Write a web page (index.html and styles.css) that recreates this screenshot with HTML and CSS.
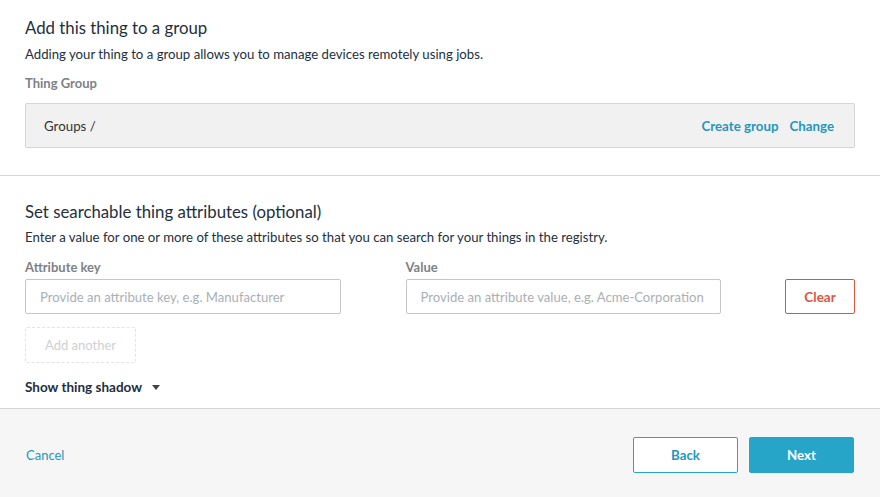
FILE: index.html
```html
<!DOCTYPE html>
<html>
<head>
<meta charset="utf-8">
<link rel="stylesheet" href="styles.css">
</head>
<body>
<div class="page">
  <section class="section group-section">
    <h2 class="title">Add this thing to a group</h2>
    <p class="desc">Adding your thing to a group allows you to manage devices remotely using jobs.</p>
    <div class="label">Thing Group</div>
    <div class="group-box">
      <span class="crumb">Groups /</span>
      <span class="links"><a class="link">Create group</a><a class="link">Change</a></span>
    </div>
  </section>
  <section class="section attr-section">
    <h2 class="title">Set searchable thing attributes (optional)</h2>
    <p class="desc">Enter a value for one or more of these attributes so that you can search for your things in the registry.</p>
    <div class="attr-row">
      <div class="field">
        <div class="label">Attribute key</div>
        <div class="input">Provide an attribute key, e.g. Manufacturer</div>
      </div>
      <div class="field">
        <div class="label">Value</div>
        <div class="input">Provide an attribute value, e.g. Acme-Corporation</div>
      </div>
      <button class="btn-clear">Clear</button>
    </div>
    <button class="btn-add">Add another</button>
    <div class="shadow-toggle">Show thing shadow <span class="caret"></span></div>
  </section>
  <footer class="footer">
    <a class="cancel">Cancel</a>
    <div class="actions">
      <button class="btn btn-back">Back</button>
      <button class="btn btn-next">Next</button>
    </div>
  </footer>
</div>
</body>
</html>
```
FILE: styles.css
```css
* { box-sizing: border-box; }
html, body { margin: 0; padding: 0; background: #fff; }
body { font-family: Lato, "Open Sans", sans-serif; color: #16191f; width: 880px; height: 497px; overflow: hidden; }
.page { display: flex; flex-direction: column; height: 497px; }
.section { padding: 0 25px; }
.group-section { padding-top: 17px; border-bottom: 1px solid #d5d5d5; height: 176px; }
.title { font-size: 16.8px; font-weight: 400; margin: 0; line-height: 22px; color: #232f3e; }
.desc { font-size: 13.2px; margin: 5px 0 0; line-height: 18px; color: #232f3e; }
.group-section .desc { margin-top: 6px; }
.label { font-size: 13px; font-weight: 700; color: #7d8286; line-height: 16px; margin-top: 12px; }
.group-box { margin-top: 12px; height: 45px; border: 1px solid #d5d5d5; border-radius: 2px; background: #f1f1f1; display: flex; align-items: center; justify-content: space-between; padding: 0 20px 0 18px; font-size: 13.3px; }
.crumb { color: #333; }
.links { display: flex; gap: 11px; }
.link { color: #1f97be; font-weight: 700; font-size: 13.3px; }
.attr-section { padding-top: 25px; height: 233px; border-bottom: 1px solid #d5d5d5; }
.attr-row { display: flex; align-items: flex-end; }
.attr-row .label { margin-top: 13px; }
.field { width: 316px; margin-right: 65px; }
.field + .field { margin-right: 64px; }
.input { margin-top: 4px; height: 35px; border: 1px solid #c6c6c6; border-radius: 2px; font-size: 13.1px; color: #aab0b5; padding: 0 14px; display: flex; align-items: center; }
.btn-clear { width: 70px; height: 35px; border: 1px solid #e0533c; background: #fff; color: #e0533c; font-family: inherit; font-weight: 700; font-size: 13.5px; border-radius: 2px; padding: 0; }
.btn-add { display: block; margin-top: 13px; width: 111px; height: 36px; border: 1px dashed #e4e4e4; background: #fff; color: #d0d0d0; font-family: inherit; font-size: 13px; border-radius: 2px; padding: 0; }
.shadow-toggle { margin-top: 16px; font-size: 13.5px; font-weight: 700; color: #232f3e; display: flex; align-items: center; gap: 8px; line-height: 16px; }
.caret { width: 0; height: 0; border-left: 4px solid transparent; border-right: 4px solid transparent; border-top: 5px solid #444; margin-left: 2px; }
.footer { flex: 1; background: #f6f6f6; display: flex; align-items: center; justify-content: space-between; padding: 3px 26px 0 26px; }
.cancel { color: #1f97be; font-size: 13px; }
.actions { display: flex; gap: 11px; }
.btn { width: 105px; height: 36px; font-family: inherit; font-size: 13.3px; font-weight: 700; border-radius: 2px; padding: 0; }
.btn-back { background: #fff; color: #1f97be; border: 1px solid #26a5c9; }
.btn-next { background: #26a5c9; color: #fff; border: 1px solid #26a5c9; }
```
